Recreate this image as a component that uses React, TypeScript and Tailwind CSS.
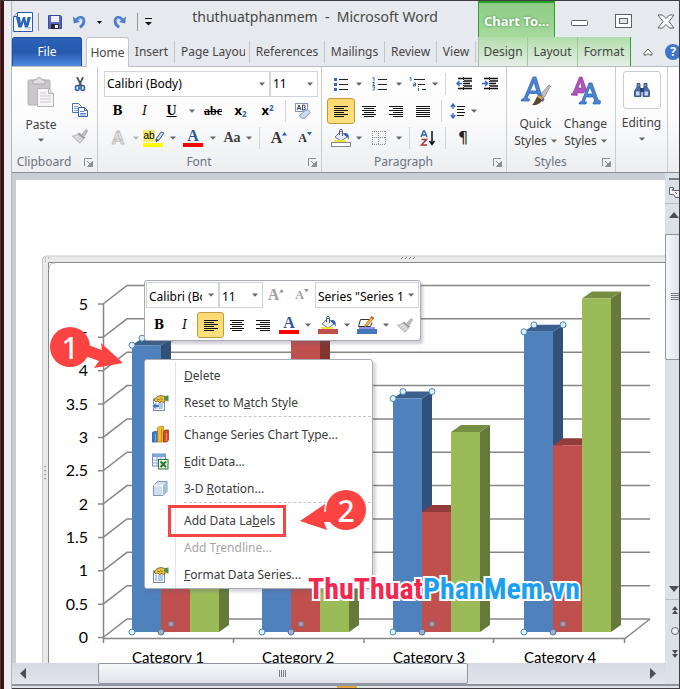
import type { ReactNode } from 'react';

const tabs = [
  { name: 'Insert', width: 'w-[46px]' },
  { name: 'Page Layout', width: 'w-[75px]', clip: true },
  { name: 'References', width: 'w-[75px]' },
  { name: 'Mailings', width: 'w-[60px]' },
  { name: 'Review', width: 'w-[52px]' },
  { name: 'View', width: 'w-[39px]' },
];

const chartTabs = [
  { name: 'Design', width: 'w-[49px]' },
  { name: 'Layout', width: 'w-[50px]' },
  { name: 'Format', width: 'w-[53px]' },
];

const categories = [
  { name: 'Category 1', x: 132, values: [4.3, 2.4, 2] },
  { name: 'Category 2', x: 262, values: [2.5, 4.4, 2] },
  { name: 'Category 3', x: 393, values: [3.5, 1.8, 3] },
  { name: 'Category 4', x: 524, values: [4.5, 2.8, 5] },
];

const series = [
  { front: '#4f81bd', side: '#31517b', top: '#3a608f' },
  { front: '#c0504d', side: '#833532', top: '#923b38' },
  { front: '#9bbb59', side: '#65793a', top: '#758e43' },
];

const ticks = [0, 0.5, 1, 1.5, 2, 2.5, 3, 3.5, 4, 4.5, 5];

const BASE = 632;
const UNIT = 66.7;

/* ---------- icons ---------- */

const Caret = ({ pale = false }: { pale?: boolean }) => (
  <svg width="6" height="4" viewBox="0 0 6 4" className="shrink-0">
    <path d="M0 0.5h6L3 3.8z" fill={pale ? '#b5b5b5' : '#666'} />
  </svg>
);

const WordLogo = () => (
  <svg width="20" height="20" viewBox="0 0 20 20">
    <path d="M4.500.5h15v19H.5v-15z" fill="#fff" stroke="#2b5ba8" />
    <path d="M.5 4.500h4v-4" fill="#dbe8f7" stroke="#2b5ba8" />
    <path d="M3 5h4l.8 6L10 5h2.200l1 6L14.600 5H18l-3 10.500h-3.200L10.600 10l-2 5.500H5.300z" fill="#2a66b8" />
    <path d="M12 17h6M14 15.500h4" stroke="#a9c5e6" />
  </svg>
);

const SaveIcon = () => (
  <svg width="14" height="14" viewBox="0 0 14 14">
    <path d="M.5.5h12l1 1v12H.5z" fill="#5b69c6" stroke="#3c46a0" />
    <path d="M3 1h8v6H3z" fill="#eef1fb" />
    <path d="M3 9h8v5H3z" fill="#26292f" />
    <path d="M7 10h3v3H7z" fill="#fff" />
  </svg>
);

const UndoIcon = ({ flip = false }: { flip?: boolean }) => (
  <svg width="13" height="14" viewBox="0 0 13 14" className={flip ? '-scale-x-100' : ''}>
    <path d="M3.500 5C6 1 11 2 10.800 6.500c-.1 2.500-1.800 4.500-4 5.700" fill="none" stroke="#4a7dcb" strokeWidth="3" />
    <path d="M0 1.500l.8 7L7 7z" fill="#4a7dcb" />
    <path d="M4.500 5C7 2.500 10 3 10 6.500" fill="none" stroke="#8db5ec" />
  </svg>
);

const PasteIcon = () => (
  <svg width="28" height="32" viewBox="0 0 28 32">
    <rect x="1" y="4" width="22" height="25" rx="1" fill="#c9c6c9" stroke="#b3b0b3" />
    <path d="M6 8V4h3c0-3 6-3 6 0h3v4z" fill="#e1dfe1" stroke="#aaa7aa" />
    <path d="M10.500 12.500h11l5 5v13h-16z" fill="#f7f6f7" stroke="#b7b4b7" />
    <path d="M21.500 12.500v5h5" fill="#e1dfe1" stroke="#b7b4b7" />
    <path d="M13 17h6M13 20h11M13 23h11M13 26h11" stroke="#c9c6c9" />
  </svg>
);

const CutIcon = () => (
  <svg width="12" height="15" viewBox="0 0 12 15">
    <path d="M3 0l4.500 9M9 0L5 9" stroke="#48536b" strokeWidth="1.800" />
    <ellipse cx="3.300" cy="11" rx="1.800" ry="2.500" fill="none" stroke="#2c5ba8" strokeWidth="1.600" />
    <ellipse cx="8.700" cy="11" rx="1.800" ry="2.500" fill="none" stroke="#2c5ba8" strokeWidth="1.600" />
  </svg>
);

const CopyIcon = () => (
  <svg width="16" height="14" viewBox="0 0 16 14">
    <path d="M.5.5h6l3 3v6h-9z" fill="#fff" stroke="#4674b8" />
    <path d="M2 3.500h4M2 5.500h6M2 7.500h4" stroke="#7ea4d8" />
    <path d="M6.500 4.500h6l3 3v6h-9z" fill="#fff" stroke="#3563ad" />
    <path d="M12.500 4.500v3h3" fill="none" stroke="#3563ad" />
    <path d="M8 8.500h4M8 10.500h6M8 12h6" stroke="#5c8ace" />
  </svg>
);

const BrushIcon = () => (
  <svg width="16" height="15" viewBox="0 0 16 15">
    <path d="M10 5l4-4.500 1.800 1.300L12.500 7z" fill="#bfbcbf" stroke="#a09da0" strokeWidth=".6" />
    <path d="M7 3.500l6.500 5-2 1.500L5.500 5z" fill="#a19ea1" />
    <path d="M5.500 5l6 5-3.500 4.500L0 7c2 0 4-1 5.500-2z" fill="#cfccce" stroke="#aaa7aa" strokeWidth=".6" />
    <path d="M3 8l4-1M5 10l4-2M7 12l3-2" stroke="#ece9eb" />
  </svg>
);

const EraserIcon = () => (
  <svg width="16" height="16" viewBox="0 0 16 16">
    <rect x=".5" y=".5" width="12" height="8" fill="#fff" stroke="#8497b8" />
    <path d="M2 7l2-5 2 5M3 5.500h2M7.500 2v5h1.500c2 0 2-2.500 0-2.500 1.500 0 1.500-2.500 0-2.500z" fill="none" stroke="#35415c" />
    <path d="M5 12l6-5c1-.8 4.500 1 3.700 3l-5 5c-1.700 1-6-1-4.700-3z" fill="#cfdcf2" stroke="#7e92bc" />
  </svg>
);

const HighlightIcon = () => (
  <svg width="10" height="11" viewBox="0 0 10 11">
    <path d="M1 8l5-7 3 1-5 7-3 1.500z" fill="#c9d9ee" stroke="#4a5f84" />
    <path d="M1 8l3 1-3 1.700z" fill="#31405e" />
  </svg>
);

const BucketIcon = ({ bar }: { bar: string }) => (
  <svg width="20" height="18" viewBox="0 0 20 18">
    <path d="M10 2l6 6-6 4-6-4z" fill="#e9eef6" stroke="#6b7791" />
    <path d="M8.500 6V1.500c0-1.500 3-1.500 3 0V7" fill="none" stroke="#4b5672" />
    <path d="M13 4c4-.5 5.500 2 4.500 7-1-2.500-1.500-4-3.500-4z" fill="#2e61b5" />
    <path d="M3 12h12" stroke="#f3e600" strokeWidth="1.500" />
    <rect x=".5" y="13.500" width="19" height="4" fill={bar} stroke={bar === '#fff' ? '#888' : bar} />
  </svg>
);

const PenIcon = () => (
  <svg width="20" height="18" viewBox="0 0 20 18">
    <path d="M12 3.500H3.500L1.500 10.500h12l1.500-4" fill="#fff" stroke="#333" />
    <path d="M8 9l6.500-8 2 1.500L10 10l-2.500 1z" fill="#f5b941" stroke="#8b5b20" strokeWidth=".7" />
    <path d="M14.500 0l2.500 2-1 1.200-2.500-2z" fill="#c9453a" />
    <path d="M2 12h16" stroke="#2222e8" />
    <rect y="13" width="20" height="5" fill="#4577bd" />
  </svg>
);

const BorderIcon = () => (
  <svg width="14" height="14" viewBox="0 0 14 14">
    <path d="M.5 0v14M13.500 0v14M6.500 0v14M0 .5h14M0 13.500h14M0 6.500h14" stroke="#888" strokeDasharray="1 1" />
  </svg>
);

const SortIcon = () => (
  <svg width="15" height="16" viewBox="0 0 15 16">
    <path d="M1 7l2.500-6h1L7 7M2 5h4" fill="none" stroke="#3a66ae" strokeWidth="1.500" />
    <path d="M1.500 9.500h5L1.500 15H7" fill="none" stroke="#a2393a" strokeWidth="1.500" />
    <path d="M12 1v13M9.500 11l2.500 3.500 2.500-3.500" fill="none" stroke="#111" strokeWidth="1.500" />
  </svg>
);

const SpacingIcon = () => (
  <svg width="16" height="16" viewBox="0 0 16 16">
    <path d="M3 1v5M3 10v5M.8 4L3 1l2.200 3M.8 12L3 15l2.200-3" fill="none" stroke="#2f68c8" strokeWidth="1.300" />
    <path d="M7 3.500h8M7 6.500h7M7 9.500h8M7 12.500h7" stroke="#111" />
  </svg>
);

const LinesIcon = ({ kind }: { kind: 'left' | 'center' | 'right' | 'justify' }) => {
  const paths = {
    left: 'M0 .5h14M0 2.500h10M0 4.500h14M0 6.500h10M0 8.500h14M0 10.500h10',
    center: 'M0 .5h14M2 2.500h10M0 4.500h14M2 6.500h10M0 8.500h14M2 10.500h10',
    right: 'M0 .5h14M4 2.500h10M0 4.500h14M4 6.500h10M0 8.500h14M4 10.500h10',
    justify: 'M0 .5h14M0 2.500h14M0 4.500h14M0 6.500h14M0 8.500h14M0 10.500h14',
  };
  return (
    <svg width="14" height="11" viewBox="0 0 14 11">
      <path d={paths[kind]} stroke="#111" />
    </svg>
  );
};

const BulletsIcon = () => (
  <svg width="14" height="14" viewBox="0 0 14 14">
    <path d="M5 2.500h9M5 7.500h9M5 12.500h9" stroke="#222" />
    <path d="M0 1h3v3H0zM0 6h3v3H0zM0 11h3v3H0z" fill="#3a66b5" />
  </svg>
);

const NumbersIcon = () => (
  <svg width="15" height="14" viewBox="0 0 15 14">
    <path d="M6 2.500h9M6 7.500h9M6 12.500h9" stroke="#222" />
    <path d="M.5 1L2 .5V4M.5 5.500h2L.8 8.500H3M.5 10H3l-1.200 1.500c2 .5.500 2-1.300 1.500" fill="none" stroke="#3a66b5" />
  </svg>
);

const MultiIcon = () => (
  <svg width="17" height="15" viewBox="0 0 17 15">
    <path d="M5 2.500h11M9 7.500h7M13 12.500h4" stroke="#222" />
    <path d="M.5 1L2 .5V4M4.500 6h2v3h-2V7.500h2M9.500 11V14M9.500 9v1" fill="none" stroke="#3a66b5" />
  </svg>
);

const IndentIcon = ({ out = false }: { out?: boolean }) => (
  <svg width="16" height="14" viewBox="0 0 16 14">
    <path d="M2 1.500h14M8 4h8M8 6.500h6M8 9h8M2 11.500h14" stroke="#111" strokeWidth="1.300" />
    <path d="M7.500 0v14" stroke="#111" strokeDasharray="1 1" />
    <path d={out ? 'M6 6.500H1M3.500 4L1 6.500 3.500 9' : 'M0 6.500h5M3 4l2.500 2.500L3 9'} fill="none" stroke="#2f68c8" strokeWidth="1.500" />
  </svg>
);

const Launcher = () => (
  <svg width="9" height="9" viewBox="0 0 9 9">
    <path d="M.5 8V.5H8" fill="none" stroke="#8b8f95" />
    <path d="M3 3l3 3M8.500 3.500v5h-5z" stroke="#8b8f95" fill="#8b8f95" />
  </svg>
);

const QuickStylesIcon = () => (
  <svg width="30" height="31" viewBox="0 0 30 31">
    <path d="M0 25l1-2 2-.6L12 1h3l6 20 2 1-.5 3h-7l.3-2 2-.5-1.300-5H8l-2 5 2.500.5-.5 2zM9 15h6.700L13 6z" fill="#4a84d6" stroke="#2d5da8" strokeWidth=".7" />
    <path d="M20 18l8-9 1.500 1-6 11z" fill="#c9c4bd" stroke="#77736c" strokeWidth=".7" />
    <path d="M18 19l4 3c-1 4-5 8-11 7 3-2 3-7 7-10z" fill="#5d4732" />
    <path d="M18 19l4 3-1 2-4.500-3z" fill="#e0a646" />
  </svg>
);

const ChangeStylesIcon = () => (
  <svg width="30" height="30" viewBox="0 0 30 30">
    <path d="M0 19l.5-1.500L2 17 8.500 1h2.500l4.500 13-3 3h-6l-1 .3 1 .7-.3 1.500zM7 12h4L9.500 5.500z" fill="#b153b8" stroke="#86318f" strokeWidth=".6" />
    <path d="M8 28l.7-2 2-.5L18 7h3l6 17 2.500 1-.5 3h-7l.3-2 1.500-.5L22.500 21H15l-1.500 4.500 2 .5-.5 2zM16 18h5.700L19 11z" fill="#4a84d6" stroke="#2d5da8" strokeWidth=".7" />
  </svg>
);

const BinocularsIcon = () => (
  <svg width="16" height="14" viewBox="0 0 16 14">
    <path d="M3 .5h3V4l1 2v7.500H.5V8L3 4zM10 .5h3V4l2.500 4v5.500H9V6l1-2z" fill="#4a6fa8" stroke="#2a457a" strokeWidth=".8" />
    <path d="M6 5h4v4H6z" fill="#2a457a" />
    <path d="M2 8.500h3.500v4H2zM10.500 8.500H14v4h-3.500z" fill="#c5d7ef" />
    <path d="M3.500 2h2M10.500 2h2" stroke="#a9c1e3" />
  </svg>
);

const PropertiesIcon = ({ reset = false }: { reset?: boolean }) => (
  <svg width="17" height="16" viewBox="0 0 17 16">
    <rect x="1.500" y="4" width="11" height="11.500" fill="#fff" stroke="#7388ac" />
    <path d="M3 9h2M6 9h5M3 11h2M6 11h5M3 13h2M6 13h5" stroke="#6b8fc5" />
    <path d="M2 5l3-3.500L9 .5l4 1v5L11 7.500 9 6 8 8 6 6 4 7z" fill="#eec245" stroke="#6d541c" strokeWidth=".8" />
    <path d="M5 4l3 1M8 3l3 2" stroke="#6d541c" strokeWidth=".7" />
    <path d="M12.500 1l4-.5v6l-4-1.500z" fill="#4b8e50" />
    {reset && <path d="M0 11L4 7.500V9.500H7.500v3H4v2z" fill="#3f78ce" stroke="#fff" strokeWidth=".5" />}
  </svg>
);

const ChartTypeIcon = () => (
  <svg width="17" height="17" viewBox="0 0 17 17">
    <path d="M0 7l2-1.500h3.500V16H0z" fill="#3d7bc6" stroke="#23559a" strokeWidth=".7" />
    <path d="M5.500 2L7.500.500h4V16h-6z" fill="#f4bd2c" stroke="#a9750e" strokeWidth=".7" />
    <path d="M11.500 5.500l1.500-1.500h3.500v10l-1.500 2h-3.500z" fill="#dc4a25" stroke="#9b2a10" strokeWidth=".7" />
    <path d="M9.500 3v12.500" stroke="#c58b14" />
    <path d="M14.500 7v8.500M3.500 8v7.500" stroke="#fff" strokeOpacity=".35" />
  </svg>
);

const EditDataIcon = () => (
  <svg width="17" height="17" viewBox="0 0 17 17">
    <rect x=".5" y="1" width="13" height="12" fill="#fff" stroke="#6c8fc8" />
    <path d="M.5 1h13v3H.500z" fill="#7fa3de" />
    <path d="M.5 7h13M.5 10h13M5 1v12M9 1v12" stroke="#86a6d6" />
    <rect x="6.500" y="6.500" width="9.500" height="9.500" fill="#e8f3e6" stroke="#2c7a35" />
    <path d="M8.500 8.500l5.500 5.500M14 8.500L8.500 14" stroke="#217a2d" strokeWidth="2" />
  </svg>
);

const CubeIcon = () => (
  <svg width="15" height="15" viewBox="0 0 15 15">
    <path d="M.5 4.500L4.500.500h9.500v10l-4 4H.500z" fill="#cfdff1" stroke="#7f98b8" />
    <path d="M1 4.500h9v9.500" fill="none" stroke="#fff" strokeWidth="1.500" />
    <path d="M10 4.500L14 .5v10l-4 4z" fill="#a3bddc" />
  </svg>
);

/* ---------- small building blocks ---------- */

type ToolProps = { label: string; width: string; active?: boolean; children: ReactNode };

const Tool = ({ label, width, active, children }: ToolProps) => (
  <button
    type="button"
    aria-label={label}
    className={`flex h-[26px] shrink-0 items-center justify-center ${width} ${
      active ? 'rounded-[3px] border border-[#c29b3e] bg-gradient-to-b from-[#fbd972] to-[#fde07f]' : ''
    }`}
  >
    {children}
  </button>
);

const Divider = ({ width = 'w-2' }: { width?: string }) => (
  <div className={`flex h-[22px] shrink-0 justify-center ${width}`}>
    <div className="w-px bg-[#d3d6da]" />
  </div>
);

const Combo = ({ label, value, width }: { label: string; value: string; width: string }) => (
  <div className={`relative h-[26px] shrink-0 border border-[#d0d3d8] bg-white ${width}`}>
    <select aria-label={label} className="h-full w-full appearance-none overflow-hidden bg-transparent pl-0.5 pr-4 text-xs text-black">
      <option>{value}</option>
    </select>
    <div className="pointer-events-none absolute inset-y-0 right-1 flex items-center">
      <Caret />
    </div>
  </div>
);

const BigA = ({ className = 'text-[#2f5597]', bar }: { className?: string; bar?: string }) => (
  <span className="flex flex-col items-center">
    <span className={`font-['Liberation_Serif'] text-base font-bold leading-[14px] ${className}`}>A</span>
    {bar && <span className={`h-1 w-5 ${bar}`} />}
  </span>
);

const SizeA = ({ grow = false, pale = false }: { grow?: boolean; pale?: boolean }) => (
  <span className="flex items-center">
    <span className={`font-['Liberation_Serif'] font-bold ${grow ? 'text-base' : 'text-xs'} ${pale ? 'text-[#a0a0a0]' : 'text-[#333]'}`}>A</span>
    <svg width="5" height="12" viewBox="0 0 5 12">
      <path d={grow ? 'M0 3.500L2.500 0 5 3.500z' : 'M0 0h5L2.500 3.500z'} fill={pale ? '#999' : '#2f5db5'} />
    </svg>
  </span>
);

const Group = ({ name, width, launcher, children }: { name: string; width: string; launcher?: boolean; children: ReactNode }) => (
  <section className={`flex shrink-0 flex-col border-r border-[#c9ccd1] ${width}`}>
    <div className="min-h-0 flex-1">{children}</div>
    <div className="flex h-5 items-center pr-1">
      <h2 className="flex-1 pr-2 text-center text-xs text-[#6b7380]">{name}</h2>
      {launcher && (
        <button type="button" aria-label={`${name} options`}>
          <Launcher />
        </button>
      )}
    </div>
  </section>
);

const Callout = ({ n }: { n: number }) => (
  <span className="flex h-10 w-10 items-center justify-center rounded-full bg-[#fb4342] font-['Noto_Sans'] text-[30px] font-medium text-white">
    {n}
  </span>
);

/* ---------- page sections ---------- */

const TitleBar = () => (
  <header className="flex h-9 items-stretch">
    <div className="flex items-center gap-[11px] pb-0.5 pl-px pt-2">
      <WordLogo />
      <div className="-mx-1.5 h-[18px] w-px bg-[#999]" />
      <button type="button" aria-label="Save" className="pl-1"><SaveIcon /></button>
      <button type="button" aria-label="Undo"><UndoIcon /></button>
      <svg width="5" height="3" viewBox="0 0 5 3"><path d="M0 0h5L2.500 3z" fill="#111" /></svg>
      <button type="button" aria-label="Redo"><UndoIcon flip /></button>
      <div className="h-[18px] w-px bg-[#999]" />
      <button type="button" aria-label="Customize" className="-ml-1">
        <svg width="7" height="8" viewBox="0 0 7 8"><path d="M0 .5h7" stroke="#111" /><path d="M0 4h7L3.500 7.500z" fill="#111" /></svg>
      </button>
    </div>
    <h1 className="flex-1 whitespace-nowrap pt-1 text-center text-sm leading-6 text-[#474747]">
      thuthuatphanmem&nbsp; -&nbsp; Microsoft Word
    </h1>
    <div className="w-[77px] border-x border-t-2 border-[#27a327] bg-gradient-to-b from-[#8fcb87] to-[#a5da9c] pt-1.5 text-center text-[13px] font-bold leading-6 text-white [text-shadow:0_0_3px_#3d8b3d]">
      Chart To...
    </div>
    <div className="flex w-[124px] items-center justify-between pl-4 pr-1 pt-1">
      <button type="button" aria-label="Minimize" className="pt-1">
        <svg width="18" height="6" viewBox="0 0 18 6"><rect x=".5" y=".5" width="16" height="5" rx="1" fill="#fff" stroke="#5c6068" /></svg>
      </button>
      <button type="button" aria-label="Maximize">
        <svg width="17" height="14" viewBox="0 0 17 14">
          <rect x=".5" y=".5" width="16" height="13" fill="#fff" stroke="#5c6068" />
          <rect x="4.500" y="4.500" width="8" height="5" fill="#e1e4e8" stroke="#5c6068" />
        </svg>
      </button>
      <button type="button" aria-label="Close">
        <svg width="18" height="15" viewBox="0 0 18 15">
          <path d="M1 1h4.500L9 4.500 12.500 1H17l-5 6.500 5 6.500h-4.500L9 10.500 5.500 14H1l5-6.500z" fill="#fff" stroke="#5c6068" />
        </svg>
      </button>
    </div>
  </header>
);

const TabRow = () => (
  <nav className="flex h-[30px] items-stretch border-b border-[#b9bdc3] text-xs text-[#454545]">
    <button type="button" className="mr-1 w-[70px] shrink-0 rounded-t-[3px] border border-b-0 border-[#1f4e9c] bg-gradient-to-b from-[#2c62b8] via-[#2659ae] to-[#4f8be0] text-white">
      File
    </button>
    <button type="button" className="-mb-px w-[43px] shrink-0 rounded-t-[3px] border border-b-0 border-[#c1c5ca] bg-white">Home</button>
    {tabs.map(tab => (
      <button key={tab.name} type="button" className={`flex shrink-0 items-center ${tab.width}`}>
        <span className={`flex-1 overflow-hidden whitespace-nowrap ${tab.clip ? 'ml-[6px] mr-1 text-left' : 'text-center'}`}>{tab.name}</span>
        <span className="h-[22px] w-px bg-[#c3c7cc]" />
      </button>
    ))}
    <div className="ml-0.5 flex shrink-0 border-r border-[#27a327] bg-gradient-to-b from-[#b2ddab] to-[#e6eee7]">
      {chartTabs.map(tab => (
        <button key={tab.name} type="button" className={`border-l border-[#9fc79b] ${tab.width}`}>{tab.name}</button>
      ))}
    </div>
    <div className="flex flex-1 items-center justify-between overflow-hidden pl-3">
      <button type="button" aria-label="Minimize the ribbon" className="shrink-0">
        <svg width="10" height="8" viewBox="0 0 10 8"><path d="M1 5.500L5 1l4 4.500v1.500H6.500L5 5.500 3.500 7H1z" fill="#fff" stroke="#555" /></svg>
      </button>
      <button type="button" aria-label="Help" className="-mr-0.5 h-4 w-4 shrink-0 rounded-full bg-[#3e76c8] text-xs font-bold leading-4 text-white">?</button>
    </div>
  </nav>
);

const Ribbon = () => (
  <div className="flex h-[106px] border-b border-[#8c9197] bg-gradient-to-b from-white via-[#fbfbfc] to-[#eceef1] text-xs text-[#3f3f3f]">
    <Group name="Clipboard" width="w-[86px]" launcher>
      <div className="flex">
        <button type="button" className="flex w-[58px] flex-col items-center pt-[9px]">
          <PasteIcon />
          <span className="mt-2 leading-[18px]">Paste</span>
          <span className="flex h-3 items-center"><Caret /></span>
        </button>
        <div className="flex flex-col pt-1">
          <Tool label="Cut" width="w-5"><CutIcon /></Tool>
          <Tool label="Copy" width="w-5"><CopyIcon /></Tool>
          <Tool label="Format Painter" width="w-5"><BrushIcon /></Tool>
        </div>
      </div>
    </Group>

    <Group name="Font" width="w-[224px]" launcher>
      <div className="flex flex-col gap-px pl-[6px] pt-1">
        <div className="flex">
          <Combo label="Font" value="Calibri (Body)" width="w-[166px]" />
          <Combo label="Font size" value="11" width="w-12" />
        </div>
        <div className="flex items-center text-black">
          <Tool label="Bold" width="w-[27px]"><b className="font-['DejaVu_Serif'] text-xs">B</b></Tool>
          <Tool label="Italic" width="w-[27px]"><i className="font-['DejaVu_Serif'] text-xs">I</i></Tool>
          <Tool label="Underline" width="w-[27px]"><b className="font-['Liberation_Serif'] text-sm underline">U</b></Tool>
          <Tool label="Underline style" width="w-[14px]"><Caret /></Tool>
          <Tool label="Strikethrough" width="w-7"><b className="font-['Liberation_Serif'] text-xs line-through">abc</b></Tool>
          <Tool label="Subscript" width="w-[27px]"><b className="text-[13px]">x<sub className="text-[8px] text-[#2f5db5]">2</sub></b></Tool>
          <Tool label="Superscript" width="w-[27px]"><b className="text-[13px]">x<sup className="text-[8px] text-[#2f5db5]">2</sup></b></Tool>
          <Divider />
          <Tool label="Clear formatting" width="w-7"><EraserIcon /></Tool>
        </div>
        <div className="flex items-center">
          <Tool label="Text effects" width="w-7"><span className="font-['Roboto'] text-lg font-bold text-[#ececec] [-webkit-text-stroke:1px_#c2c2c2]">A</span></Tool>
          <Tool label="Text effects menu" width="w-2"><Caret pale /></Tool>
          <Tool label="Highlight" width="w-7">
            <span className="flex flex-col">
              <span className="flex h-[14px] items-center">
                <span className="bg-[#f3ec6a] font-['Liberation_Sans'] text-[10px] leading-3 text-black">ab</span>
                <HighlightIcon />
              </span>
              <span className="h-1 w-5 bg-[#ffff00]" />
            </span>
          </Tool>
          <Tool label="Highlight colors" width="w-[10px]"><Caret /></Tool>
          <Tool label="Font color" width="w-[30px]"><BigA bar="bg-[#ff0000]" /></Tool>
          <Tool label="Font colors" width="w-[10px]"><Caret /></Tool>
          <Tool label="Change case" width="w-7"><b className="font-['Liberation_Serif'] text-sm">Aa</b></Tool>
          <Tool label="Case menu" width="w-[6px]"><Caret /></Tool>
          <Divider width="w-[14px]" />
          <Tool label="Grow font" width="w-[26px]"><SizeA grow /></Tool>
          <Tool label="Shrink font" width="w-[26px]"><SizeA /></Tool>
        </div>
      </div>
    </Group>

    <Group name="Paragraph" width="w-[185px]" launcher>
      <div className="flex flex-col gap-px pl-[5px] pt-1">
        <div className="flex items-center">
          <Tool label="Bullets" width="w-7"><BulletsIcon /></Tool>
          <Tool label="Bullet styles" width="w-2"><Caret /></Tool>
          <Tool label="Numbering" width="w-8"><NumbersIcon /></Tool>
          <Tool label="Number styles" width="w-2"><Caret /></Tool>
          <Tool label="Multilevel list" width="w-7"><MultiIcon /></Tool>
          <Tool label="List styles" width="w-2"><Caret /></Tool>
          <Divider width="w-3" />
          <Tool label="Decrease indent" width="w-[26px]"><IndentIcon out /></Tool>
          <Tool label="Increase indent" width="w-[26px]"><IndentIcon /></Tool>
        </div>
        <div className="flex items-center">
          <Tool label="Align left" width="w-7" active><LinesIcon kind="left" /></Tool>
          <Tool label="Center" width="w-[27px]"><LinesIcon kind="center" /></Tool>
          <Tool label="Align right" width="w-7"><LinesIcon kind="right" /></Tool>
          <Tool label="Justify" width="w-[26px]"><LinesIcon kind="justify" /></Tool>
          <Divider width="w-[10px]" />
          <Tool label="Line spacing" width="w-6"><SpacingIcon /></Tool>
          <Tool label="Spacing menu" width="w-2"><Caret /></Tool>
        </div>
        <div className="flex items-center">
          <Tool label="Shading" width="w-7"><BucketIcon bar="#fff" /></Tool>
          <Tool label="Shading colors" width="w-2"><Caret /></Tool>
          <Tool label="Borders" width="w-8"><BorderIcon /></Tool>
          <Tool label="Border styles" width="w-2"><Caret /></Tool>
          <Divider width="w-3" />
          <Tool label="Sort" width="w-6"><SortIcon /></Tool>
          <Divider width="w-3" />
          <Tool label="Show marks" width="w-6"><span className="font-['DejaVu_Sans'] text-base text-[#222]">¶</span></Tool>
        </div>
      </div>
    </Group>

    <Group name="Styles" width="w-[109px]" launcher>
      <div className="flex justify-center pt-[9px]">
        <button type="button" className="flex w-[49px] flex-col items-center">
          <QuickStylesIcon />
          <span className="mt-2 leading-[17px]">Quick</span>
          <span className="flex items-center gap-1 leading-[17px]">Styles <Caret /></span>
        </button>
        <button type="button" className="flex w-[51px] flex-col items-center">
          <span className="h-[31px]"><ChangeStylesIcon /></span>
          <span className="mt-2 leading-[17px]">Change</span>
          <span className="flex items-center gap-1 leading-[17px]">Styles <Caret /></span>
        </button>
      </div>
    </Group>

    <section className="flex w-[52px] shrink-0 flex-col items-center border-r border-[#c9ccd1] pt-1">
      <button type="button" className="flex flex-col items-center">
        <span className="flex h-[38px] w-[38px] items-center justify-center rounded-[3px] border border-[#c9cdd3] bg-white">
          <BinocularsIcon />
        </span>
        <span className="mt-1 leading-5">Editing</span>
        <span className="flex h-3 items-center"><Caret /></span>
      </button>
    </section>
  </div>
);

const Chart = () => (
  <svg width="649" height="483" viewBox="16 180 649 483" className="block" role="img" aria-label="Clustered 3-D column chart">
    {/* object frame */}
    <path d="M42 663V260q0-4 4-4h620v7H49v400z" fill="#e9e9e9" />
    <path d="M42.500 663V260q0-4 4-4H666" fill="none" stroke="#c9c9c9" />
    <path d="M48.500 663V262.500H666" fill="none" stroke="#8a8a8a" />
    <path d="M49 269q0-6 6-6" fill="none" stroke="#bbb" />
    <path d="M401 259l2-2M405 259l2-2M409 259l2-2M413 259l2-2M44 467l2-1M44 471l2-1M44 475l2-1M44 479l2-1M45 258h1M48 258h1M45 261h1" stroke="#888" />

    {/* walls and gridlines */}
    {ticks.map(t => {
      const y = 637.500 - t * UNIT;
      return <path key={t} d={`M98 ${y}h5L127 ${y - 18.5}H650`} fill="none" stroke="#868686" strokeWidth="1.500" />;
    })}
    <path d="M103.500 304V638M103 638.500H625L650 619M103.500 638v5M233.500 638v5M364 638v5M493.500 638v5M624.500 638v5" fill="none" stroke="#868686" strokeWidth="1.500" />

    {categories.map(cat => (
      <g key={cat.name}>
        {cat.values.map((v, i) => {
          const x = cat.x + i * 29;
          const top = BASE - v * UNIT;
          return (
            <g key={i}>
              <path d={`M${x + 29} ${top}l10-7V${BASE - 7}l-10 7z`} fill={series[i].side} />
              <path d={`M${x} ${top}l10-7h29l-10 7z`} fill={series[i].top} />
              <path d={`M${x} ${top}h29V${BASE}h-29z`} fill={series[i].front} />
            </g>
          );
        })}
        {[[0, 0], [10, -7], [39, -7]].map(([dx, dy]) => (
          <circle key={dx} cx={cat.x + dx} cy={BASE - cat.values[0] * UNIT + dy} r="3" fill="#dff3fa" stroke="#4a87b0" />
        ))}
        <circle cx={cat.x} cy={BASE} r="3" fill="#dff3fa" stroke="#4a87b0" />
        <circle cx={cat.x + 29} cy={BASE} r="3" fill="#9fb0c9" stroke="#4f74a6" />
        <circle cx={cat.x + 39} cy={BASE - 8} r="3" fill="#b9949b" stroke="#5a6f9b" />
        <text x={cat.x + 36} y="663" textAnchor="middle" className="fill-black font-['Lato'] text-[15px]">{cat.name}</text>
      </g>
    ))}

    {ticks.map(t => (
      <text key={t} x="88" y={643 - t * UNIT} textAnchor="end" className="fill-black font-['Lato'] text-base">{t}</text>
    ))}
  </svg>
);

const MiniToolbar = () => (
  <div className="absolute left-[128px] top-[100px] flex w-[277px] flex-col gap-1 rounded-[3px] border border-[#a9adb3] bg-white pb-0.5 pl-px pt-px shadow-[2px_3px_3px_rgba(90,90,120,0.3)]">
    <div className="flex items-center">
      <Combo label="Mini font" value="Calibri (Body)" width="w-[73px]" />
      <Combo label="Mini font size" value="11" width="w-11" />
      <Tool label="Grow" width="w-[26px]"><SizeA grow pale /></Tool>
      <Tool label="Shrink" width="w-[26px]"><SizeA pale /></Tool>
      <Combo label="Chart element" value='Series "Series 1"' width="w-[104px]" />
    </div>
    <div className="flex items-center text-black">
      <Tool label="Bold text" width="w-[26px]"><b className="font-['DejaVu_Serif'] text-xs">B</b></Tool>
      <Tool label="Italic text" width="w-[25px]"><i className="font-['DejaVu_Serif'] text-xs">I</i></Tool>
      <Tool label="Left" width="w-[27px]" active><LinesIcon kind="left" /></Tool>
      <Tool label="Middle" width="w-[26px]"><LinesIcon kind="center" /></Tool>
      <Tool label="Right" width="w-[26px]"><LinesIcon kind="right" /></Tool>
      <Tool label="Text color" width="w-[26px]"><BigA bar="bg-[#ff0000]" /></Tool>
      <Tool label="Text colors" width="w-3"><Caret /></Tool>
      <Tool label="Fill" width="w-[27px]"><BucketIcon bar="#c0504d" /></Tool>
      <Tool label="Fill colors" width="w-3"><Caret /></Tool>
      <Tool label="Outline" width="w-[27px]"><PenIcon /></Tool>
      <Tool label="Outline colors" width="w-3"><Caret /></Tool>
      <Tool label="Copy format" width="w-[26px]"><BrushIcon /></Tool>
    </div>
  </div>
);

const MenuItem = ({ icon, disabled, children }: { icon?: ReactNode; disabled?: boolean; children: ReactNode }) => (
  <button
    type="button"
    role="menuitem"
    disabled={disabled}
    className={`flex h-[27px] w-full items-center text-left text-xs ${disabled ? 'text-[#a6a6a6]' : 'text-[#3b3b3b]'}`}
  >
    <span className="flex h-full w-[31px] items-center justify-center border-r border-[#e2e4e7]">{icon}</span>
    <span className="whitespace-nowrap pl-2">{children}</span>
  </button>
);

const MenuLine = () => (
  <div className="flex h-[5px]">
    <div className="w-[31px] border-r border-[#e2e4e7]" />
    <div className="mb-1 ml-2 mr-px flex-1 border-b border-dashed border-[#c5c5c5]" />
  </div>
);

const ContextMenu = () => (
  <div role="menu" className="absolute left-[128px] top-[179px] w-[229px] rounded-[3px] border border-[#a9adb3] bg-white pt-0.5 shadow-[3px_3px_3px_rgba(90,90,120,0.25)]">
    <MenuItem><u>D</u>elete</MenuItem>
    <MenuItem icon={<PropertiesIcon reset />}>Reset to M<u>a</u>tch Style</MenuItem>
    <MenuLine />
    <MenuItem icon={<ChartTypeIcon />}>Change Series Chart T<u>y</u>pe...</MenuItem>
    <MenuItem icon={<EditDataIcon />}><u>E</u>dit Data...</MenuItem>
    <MenuItem icon={<CubeIcon />}>3-D <u>R</u>otation...</MenuItem>
    <MenuLine />
    <MenuItem>Add Data La<u>b</u>els</MenuItem>
    <MenuItem disabled>Add T<u>r</u>endline...</MenuItem>
    <MenuItem icon={<PropertiesIcon />}><u>F</u>ormat Data Series...</MenuItem>
  </div>
);

const Annotations = () => (
  <>
    <div className="absolute left-[34px] top-[147px]">
      <Callout n={1} />
      <svg width="36" height="28" viewBox="0 0 36 28" className="absolute left-9 top-4">
        <path d="M2 2l14 5-1-7 22 20-29 5 5-7-14-5z" fill="#fb4342" />
      </svg>
    </div>
    <div className="absolute left-[152px] top-[325px] h-8 w-[118px] border-[3px] border-[#f84444]" />
    <div className="absolute left-[310px] top-[310px]">
      <Callout n={2} />
      <svg width="30" height="28" viewBox="0 0 30 28" className="absolute right-9 top-[14px]">
        <path d="M0 17L25 0l-1 8 6-2v12l-6 0 3 8z" fill="#fb4342" />
      </svg>
    </div>
    <p className="absolute left-[292px] top-[391px] whitespace-nowrap font-['Liberation_Sans_Narrow','Roboto_Condensed','Roboto'] text-[30px] font-bold leading-9 text-[#f5274e] [-webkit-text-stroke:4px_white] [paint-order:stroke_fill]">
      ThuThuat<span className="text-[#1aa0f2]">PhanMem.vn</span>
    </p>
  </>
);

const VerticalScroll = () => (
  <div className="flex w-[14px] shrink-0 flex-col bg-[#dce1e8]">
    <div className="ml-1 mt-[5px] h-0.5 bg-[#777d87]" />
    <div className="flex h-6 items-center border-b border-[#b8bec6] pl-1">
      <svg width="10" height="12" viewBox="0 0 10 12">
        <path d="M.5 1.500h4v3h6v7h-4l-2-3h-4z" fill="#f8eef5" stroke="#5f6370" />
        <path d="M3 3l1 2M6 6l2 2" stroke="#5f6370" />
      </svg>
    </div>
    <button type="button" aria-label="Scroll up" className="flex h-[30px] justify-end pt-2">
      <svg width="10" height="6" viewBox="0 0 10 6"><path d="M0 6l5-6 5 6z" fill="#4b4f55" /></svg>
    </button>
    <div className="flex h-[126px] items-center justify-end rounded-l-[2px] border border-r-0 border-[#8f969f] bg-gradient-to-r from-[#f7f8fa] to-[#dfe3e9]">
      <svg width="8" height="8" viewBox="0 0 8 8"><path d="M0 .5h8M0 2.500h8M0 4.500h8M0 6.500h8" stroke="#777d87" /></svg>
    </div>
    <div className="flex-1" />
    <button type="button" aria-label="Scroll down" className="flex h-[18px] justify-end border-b border-[#b8bec6] pt-1">
      <svg width="10" height="6" viewBox="0 0 10 6"><path d="M0 0h10L5 6z" fill="#4b4f55" /></svg>
    </button>
    <div className="flex h-[84px] flex-col items-end pt-1">
      <svg width="9" height="54" viewBox="0 0 9 54">
        <path d="M2 6l3-4 3 4zM2 10l3-4 3 4zM2 46h6l-3 4zM2 50h6l-3 4z" fill="#4b4f55" />
        <circle cx="5" cy="27" r="3.500" fill="#eef0f3" stroke="#666b73" />
      </svg>
    </div>
  </div>
);

const HorizontalScroll = () => (
  <div className="flex h-[21px] shrink-0 items-stretch bg-gradient-to-b from-[#d5dae2] to-[#e2e6eb]">
    <button type="button" aria-label="Scroll left" className="flex w-[86px] items-center pl-2">
      <svg width="6" height="11" viewBox="0 0 6 11"><path d="M6 0v11L0 5.500z" fill="#4b4f55" /></svg>
    </button>
    <div className="flex w-[370px] items-center justify-center rounded-[2px] border border-[#8f969f] bg-gradient-to-b from-[#f7f8fa] to-[#dfe3e9]">
      <svg width="8" height="7" viewBox="0 0 8 7"><path d="M.5 0v7M2.500 0v7M4.500 0v7M6.500 0v7" stroke="#777d87" /></svg>
    </div>
    <div className="flex-1" />
    <button type="button" aria-label="Scroll right" className="pr-[9px]">
      <svg width="6" height="11" viewBox="0 0 6 11"><path d="M0 0v11L6 5.500z" fill="#4b4f55" /></svg>
    </button>
  </div>
);

export default function App() {
  return (
    <div className="flex min-h-screen overflow-hidden border-r border-t border-[#3f3d42] bg-[#e6e9ed] font-['Noto_Sans',sans-serif]">
      <div className="w-1 shrink-0 border-l border-[#3f3d42] bg-[#4a0d0d]" />
      <div className="w-2 shrink-0 border-r border-[#b3b8bf] bg-[#eceef1]" />
      <div className="flex min-w-0 flex-1 flex-col">
        <TitleBar />
        <TabRow />
        <Ribbon />
        <main className="flex flex-1">
          <div className="flex min-w-0 flex-1 flex-col">
            <div className="flex-1 overflow-hidden bg-[#c9ced5] pl-1 pt-[7px]">
              <div className="relative bg-white">
                <Chart />
                <MiniToolbar />
                <ContextMenu />
                <Annotations />
              </div>
            </div>
            <HorizontalScroll />
          </div>
          <VerticalScroll />
        </main>
        <footer className="flex h-[5px] shrink-0 items-end border-b border-t-2 border-b-[#3f3d42] border-t-[#8f969f] bg-[#dfe3e8] pl-[325px]">
          <div className="h-0.5 w-5 bg-[#e3a640]" />
        </footer>
      </div>
    </div>
  );
}
